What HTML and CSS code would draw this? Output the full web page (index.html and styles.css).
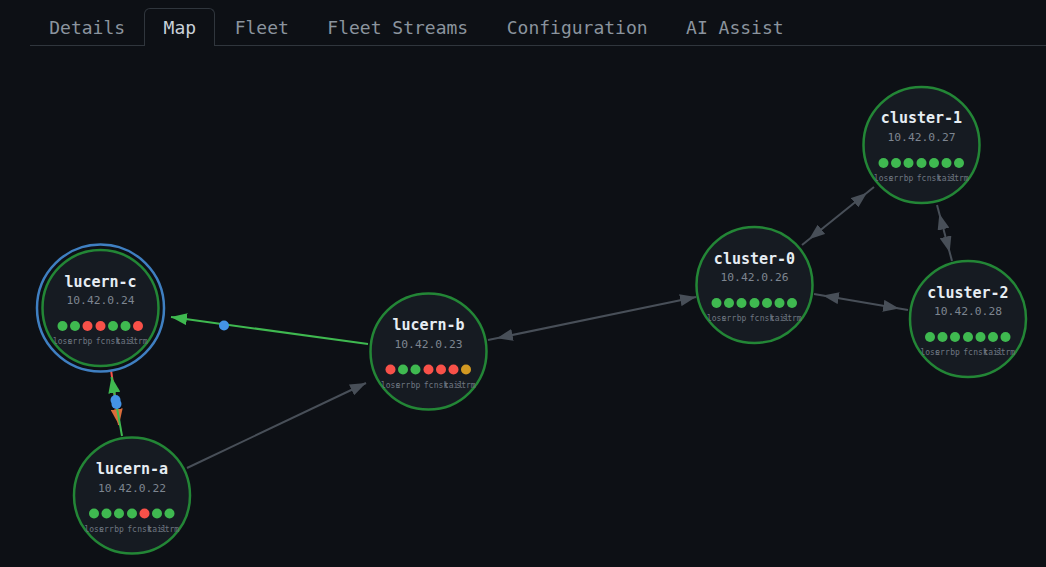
FILE: index.html
```html
<!DOCTYPE html>
<html>
<head>
<meta charset="utf-8">
<title>Map</title>
<link rel="stylesheet" href="styles.css">
</head>
<body>
<nav class="tabs">
  <a class="tab">Details</a>
  <a class="tab active">Map</a>
  <a class="tab">Fleet</a>
  <a class="tab">Fleet Streams</a>
  <a class="tab">Configuration</a>
  <a class="tab">AI Assist</a>
</nav>
<svg class="map" width="1046" height="521" viewBox="0 46 1046 521">
  <defs>
    <marker id="arrow-gray" viewBox="0 0 16 12" refX="16" refY="6" markerWidth="16" markerHeight="12" markerUnits="userSpaceOnUse" orient="auto"><path class="head-gray" d="M0 0L16 6L0 12z"/></marker>
    <marker id="arrow-inset" viewBox="0 0 25 12" refX="25" refY="6" markerWidth="25" markerHeight="12" markerUnits="userSpaceOnUse" orient="auto-start-reverse"><path class="head-gray" d="M0 0L16 6L0 12z"/></marker>
    <marker id="arrow-green" viewBox="0 0 16 12" refX="16" refY="6" markerWidth="16" markerHeight="12" markerUnits="userSpaceOnUse" orient="auto"><path class="head-green" d="M0 0L16 6L0 12z"/></marker>
    <marker id="arrow-red" viewBox="0 0 16 12" refX="16" refY="6" markerWidth="16" markerHeight="12" markerUnits="userSpaceOnUse" orient="auto"><path class="head-red" d="M0 0L16 6L0 12z"/></marker>
  </defs>

  <!-- links -->
  <line class="edge" x1="187" y1="468" x2="366" y2="383" marker-end="url(#arrow-gray)"/>
  <line class="edge" x1="488" y1="340" x2="696" y2="297" marker-start="url(#arrow-inset)" marker-end="url(#arrow-gray)"/>
  <line class="edge" x1="802" y1="245" x2="874" y2="187" marker-start="url(#arrow-inset)" marker-end="url(#arrow-inset)"/>
  <line class="edge" x1="814" y1="294" x2="908" y2="310" marker-start="url(#arrow-inset)" marker-end="url(#arrow-inset)"/>
  <line class="edge" x1="937" y1="205" x2="952" y2="261" marker-start="url(#arrow-inset)" marker-end="url(#arrow-inset)"/>
  <line class="edge-green" x1="368" y1="344" x2="171" y2="317" marker-end="url(#arrow-green)"/>
  <line class="edge-red" x1="111" y1="370" x2="119" y2="425" marker-end="url(#arrow-red)"/>
  <line class="edge-green" x1="122" y1="436" x2="111.500" y2="377" marker-end="url(#arrow-green)"/>
  <circle class="packet" cx="224" cy="325.500" r="5"/>
  <circle class="packet" cx="115.500" cy="400" r="5"/>
  <circle class="packet" cx="116.500" cy="404" r="5"/>

  <!-- nodes -->
  <circle class="selected" cx="100.500" cy="308" r="63.500"/>

  <g transform="translate(100.500 308)">
    <circle class="node" r="58"/>
    <text class="name" y="-21.500">lucern-c</text>
    <text class="ip" y="-4">10.42.0.24</text>
    <circle class="ok" cx="-38" cy="18" r="5"/><circle class="ok" cx="-25.500" cy="18" r="5"/><circle class="bad" cx="-13" cy="18" r="5"/><circle class="bad" cx="0" cy="18" r="5"/><circle class="ok" cx="12.500" cy="18" r="5"/><circle class="ok" cx="25" cy="18" r="5"/><circle class="bad" cx="37.500" cy="18" r="5"/>
    <text class="lbl" y="36"><tspan x="-38">loss</tspan><tspan x="-25.500">err</tspan><tspan x="-13">bp</tspan><tspan x="0">fc</tspan><tspan x="12.500">nsk</tspan><tspan x="25">tail</tspan><tspan x="37.500">strm</tspan></text>
  </g>

  <g transform="translate(132 495.500)">
    <circle class="node" r="58"/>
    <text class="name" y="-21.500">lucern-a</text>
    <text class="ip" y="-4">10.42.0.22</text>
    <circle class="ok" cx="-38" cy="18" r="5"/><circle class="ok" cx="-25.500" cy="18" r="5"/><circle class="ok" cx="-13" cy="18" r="5"/><circle class="ok" cx="0" cy="18" r="5"/><circle class="bad" cx="12.500" cy="18" r="5"/><circle class="ok" cx="25" cy="18" r="5"/><circle class="ok" cx="37.500" cy="18" r="5"/>
    <text class="lbl" y="36"><tspan x="-38">loss</tspan><tspan x="-25.500">err</tspan><tspan x="-13">bp</tspan><tspan x="0">fc</tspan><tspan x="12.500">nsk</tspan><tspan x="25">tail</tspan><tspan x="37.500">strm</tspan></text>
  </g>

  <g transform="translate(428.500 351.500)">
    <circle class="node" r="58"/>
    <text class="name" y="-21.500">lucern-b</text>
    <text class="ip" y="-4">10.42.0.23</text>
    <circle class="bad" cx="-38" cy="18" r="5"/><circle class="ok" cx="-25.500" cy="18" r="5"/><circle class="ok" cx="-13" cy="18" r="5"/><circle class="bad" cx="0" cy="18" r="5"/><circle class="bad" cx="12.500" cy="18" r="5"/><circle class="bad" cx="25" cy="18" r="5"/><circle class="warn" cx="37.500" cy="18" r="5"/>
    <text class="lbl" y="36"><tspan x="-38">loss</tspan><tspan x="-25.500">err</tspan><tspan x="-13">bp</tspan><tspan x="0">fc</tspan><tspan x="12.500">nsk</tspan><tspan x="25">tail</tspan><tspan x="37.500">strm</tspan></text>
  </g>

  <g transform="translate(754.500 285)">
    <circle class="node" r="58"/>
    <text class="name" y="-21.500">cluster-0</text>
    <text class="ip" y="-4">10.42.0.26</text>
    <circle class="ok" cx="-38" cy="18" r="5"/><circle class="ok" cx="-25.500" cy="18" r="5"/><circle class="ok" cx="-13" cy="18" r="5"/><circle class="ok" cx="0" cy="18" r="5"/><circle class="ok" cx="12.500" cy="18" r="5"/><circle class="ok" cx="25" cy="18" r="5"/><circle class="ok" cx="37.500" cy="18" r="5"/>
    <text class="lbl" y="36"><tspan x="-38">loss</tspan><tspan x="-25.500">err</tspan><tspan x="-13">bp</tspan><tspan x="0">fc</tspan><tspan x="12.500">nsk</tspan><tspan x="25">tail</tspan><tspan x="37.500">strm</tspan></text>
  </g>

  <g transform="translate(921.500 145)">
    <circle class="node" r="58"/>
    <text class="name" y="-22">cluster-1</text>
    <text class="ip" y="-4.500">10.42.0.27</text>
    <circle class="ok" cx="-38" cy="18" r="5"/><circle class="ok" cx="-25.500" cy="18" r="5"/><circle class="ok" cx="-13" cy="18" r="5"/><circle class="ok" cx="0" cy="18" r="5"/><circle class="ok" cx="12.500" cy="18" r="5"/><circle class="ok" cx="25" cy="18" r="5"/><circle class="ok" cx="37.500" cy="18" r="5"/>
    <text class="lbl" y="36"><tspan x="-38">loss</tspan><tspan x="-25.500">err</tspan><tspan x="-13">bp</tspan><tspan x="0">fc</tspan><tspan x="12.500">nsk</tspan><tspan x="25">tail</tspan><tspan x="37.500">strm</tspan></text>
  </g>

  <g transform="translate(968 319)">
    <circle class="node" r="58"/>
    <text class="name" y="-21.500">cluster-2</text>
    <text class="ip" y="-4">10.42.0.28</text>
    <circle class="ok" cx="-38" cy="18" r="5"/><circle class="ok" cx="-25.500" cy="18" r="5"/><circle class="ok" cx="-13" cy="18" r="5"/><circle class="ok" cx="0" cy="18" r="5"/><circle class="ok" cx="12.500" cy="18" r="5"/><circle class="ok" cx="25" cy="18" r="5"/><circle class="ok" cx="37.500" cy="18" r="5"/>
    <text class="lbl" y="36"><tspan x="-38">loss</tspan><tspan x="-25.500">err</tspan><tspan x="-13">bp</tspan><tspan x="0">fc</tspan><tspan x="12.500">nsk</tspan><tspan x="25">tail</tspan><tspan x="37.500">strm</tspan></text>
  </g>
</svg>
</body>
</html>
```
FILE: styles.css
```css
html, body {margin: 0; padding: 0; height: 100%; overflow: hidden;}
body {background-color: #0d1015; font-family: "DejaVu Sans Mono", monospace;}

.tabs {display: flex; height: 37px; margin: 8px 0 0 30px; border-bottom: 1px solid #30363d;}
.tab {padding: 8px 18.250px 0; border: 1px solid transparent; border-bottom: 0; font-size: 18px; line-height: 21px; color: #8b949e;}
.tab.active {margin-bottom: -1px; border-color: #30363d; border-radius: 6px 6px 0 0; background-color: #0d1015; color: #c9d1d9;}

.map {display: block;}

.edge {stroke: #484f58; stroke-width: 2;}
.edge-green {stroke: #3fb950; stroke-width: 2;}
.edge-red {stroke: #f85149; stroke-width: 2;}
.head-gray {fill: #484f58;}
.head-green {fill: #3fb950;}
.head-red {fill: #db6d3a;}
.packet {fill: #4493e6;}

.selected {fill: none; stroke: #3f7fc1; stroke-width: 2.500;}
.node {fill: #161b22; stroke: #238636; stroke-width: 2.500;}
.ok {fill: #3fb950;}
.bad {fill: #f85149;}
.warn {fill: #d29922;}

text {font-family: "DejaVu Sans Mono", monospace; text-anchor: middle;}
.name {font-size: 15px; font-weight: 700; fill: #e6edf3;}
.ip {font-size: 11.300px; fill: #7d8590;}
.lbl {font-size: 8px; fill: #6e7681;}
```
